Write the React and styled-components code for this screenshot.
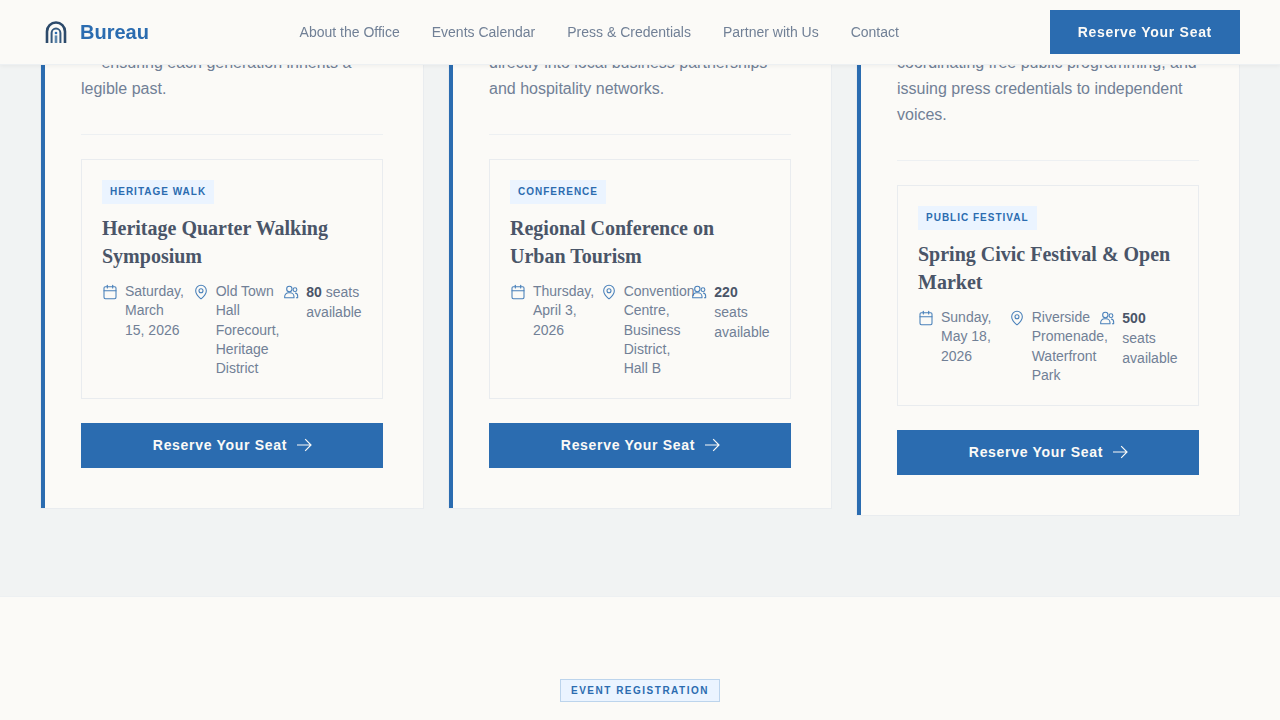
import React from "react";
import styled, { createGlobalStyle } from "styled-components";
import { Calendar, MapPin } from "lucide-react";

const GlobalStyle = createGlobalStyle`
    html, body {
        margin: 0;
        padding: 0;
        background: #fbfaf7;
        font-family: "Liberation Sans", Arial, sans-serif;
    }
    * {
        box-sizing: border-box;
    }
`;

const events = [
    {
        text: "— ensuring each generation inherits a legible past.",
        tag: "Heritage Walk",
        title: "Heritage Quarter Walking Symposium",
        date: "Saturday, March 15, 2026",
        place: "Old Town Hall Forecourt, Heritage District",
        seats: 80,
    },
    {
        text: "directly into local business partnerships and hospitality networks.",
        tag: "Conference",
        title: "Regional Conference on Urban Tourism",
        date: "Thursday, April 3, 2026",
        place: "Convention Centre, Business District, Hall B",
        seats: 220,
    },
    {
        text: "coordinating free public programming, and issuing press credentials to independent voices.",
        tag: "Public Festival",
        title: "Spring Civic Festival & Open Market",
        date: "Sunday, May 18, 2026",
        place: "Riverside Promenade, Waterfront Park",
        seats: 500,
    },
];

const links = ["About the Office", "Events Calendar", "Press & Credentials", "Partner with Us", "Contact"];

const Logo = () => (
    <svg width="32" height="32" viewBox="0 0 32 32" fill="none">
        <path d="M7 27V15.5a9 9 0 0 1 18 0V27" stroke="#2c4a6b" strokeWidth="2.6" />
        <path d="M11.6 27V17a4.4 4.4 0 0 1 8.8 0V27" stroke="#35597e" strokeWidth="2" />
        <path d="M14.7 27v-7.6h2.6V27z" fill="#5f88ad" />
        <circle cx="16" cy="17" r="1.3" fill="#2b6cb0" />
    </svg>
);

const ArrowIcon = () => (
    <svg width="14" height="12" viewBox="3 4.5 18 15" fill="none" stroke="currentColor" strokeWidth="1.5" overflow="visible">
        <path d="M13.5 4.5 21 12l-7.5 7.5M21 12H3" />
    </svg>
);

const PeopleIcon = () => (
    <svg width="16" height="16" viewBox="0 0 24 24" fill="none" stroke="currentColor" strokeWidth="1.6" strokeLinejoin="round">
        <circle cx="9.5" cy="7.5" r="4" />
        <path d="M2.5 20.5v-1.5a6 6 0 0 1 6-6h2a6 6 0 0 1 6 6v1.5z" />
        <circle cx="18" cy="8.5" r="2.8" />
        <path d="M18 13.5a4.5 4.5 0 0 1 4 4.5v2.5h-2.5" />
    </svg>
);

const App = () => (
    <Page>
        <GlobalStyle />
        <Header>
            <Brand>
                <Logo />
                Bureau
            </Brand>
            <Nav>
                {links.map((link) => (
                    <NavLink key={link}>{link}</NavLink>
                ))}
            </Nav>
            <HeaderButton>Reserve Your Seat</HeaderButton>
        </Header>

        <EventsSection>
            {events.map((event) => (
                <Card key={event.tag}>
                    <Intro>{event.text}</Intro>
                    <EventBox>
                        <Tag>{event.tag}</Tag>
                        <EventTitle>{event.title}</EventTitle>
                        <Meta>
                            <MetaItem>
                                <Calendar size={16} strokeWidth={1.6} />
                                <MetaText>{event.date}</MetaText>
                            </MetaItem>
                            <MetaItem>
                                <MapPin size={16} strokeWidth={1.6} />
                                <MetaText>{event.place}</MetaText>
                            </MetaItem>
                            <MetaItem>
                                <PeopleIcon />
                                <Seats>
                                    <strong>{event.seats}</strong> seats available
                                </Seats>
                            </MetaItem>
                        </Meta>
                    </EventBox>
                    <CardButton>
                        Reserve Your Seat
                        <ArrowIcon />
                    </CardButton>
                </Card>
            ))}
        </EventsSection>

        <RegistrationSection>
            <SectionLabel>Event Registration</SectionLabel>
        </RegistrationSection>
    </Page>
);

const Page = styled.div`
    height: 720px;
    overflow: hidden;
    background: #f1f3f3;
`;

const Header = styled.header`
    position: fixed;
    top: 0;
    left: 0;
    right: 0;
    z-index: 10;
    height: 65px;
    padding: 0 40px;
    display: flex;
    align-items: center;
    justify-content: space-between;
    background: #fbfaf7;
    border-bottom: 1px solid #edf0f2;
    box-shadow: 0 1px 4px rgba(0, 0, 0, 0.05);
`;

const Brand = styled.div`
    display: flex;
    align-items: center;
    gap: 8px;
    font-size: 20px;
    font-weight: 700;
    color: #2b6cb0;
`;

const Nav = styled.nav`
    display: flex;
    gap: 32px;
`;

const NavLink = styled.a`
    font-size: 14px;
    color: #718096;
`;

const HeaderButton = styled.button`
    height: 44px;
    padding: 0 28px;
    border: none;
    background: #2b6cb0;
    color: #fbfaf7;
    font-family: inherit;
    font-size: 14px;
    font-weight: 700;
    letter-spacing: 0.7px;
`;

const EventsSection = styled.section`
    display: grid;
    grid-template-columns: repeat(3, 1fr);
    gap: 24px;
    align-items: start;
    padding: 8px 40px 80px;
    background: #f1f3f3;
`;

const Card = styled.article`
    position: relative;
    padding: 41px 40px 40px;
    background: #fbfaf7;
    border: 1px solid #e9ecef;

    &::before {
        content: "";
        position: absolute;
        top: 0;
        bottom: 0;
        left: 0;
        width: 4px;
        background: #2b6cb0;
    }
`;

const Intro = styled.p`
    margin: 0 0 24px;
    padding-bottom: 32px;
    border-bottom: 1px solid #edf0f2;
    font-size: 16px;
    line-height: 26px;
    color: #718096;
`;

const EventBox = styled.div`
    padding: 20px;
    border: 1px solid #e9ecef;
`;

const Tag = styled.span`
    display: block;
    width: fit-content;
    height: 24px;
    padding: 0 8px;
    background: #ebf4ff;
    color: #2b6cb0;
    font-size: 10px;
    font-weight: 700;
    line-height: 24px;
    letter-spacing: 1px;
    text-transform: uppercase;
`;

const EventTitle = styled.h3`
    margin: 10px 0 12px;
    font-family: "Liberation Serif", "Times New Roman", serif;
    font-size: 20px;
    font-weight: 700;
    line-height: 28px;
    color: #4a5568;
`;

const Meta = styled.div`
    display: grid;
    grid-template-columns: repeat(3, minmax(0, 1fr));
    gap: 12px;
`;

const MetaItem = styled.div`
    display: flex;
    align-items: flex-start;
    gap: 7px;
    min-width: 0;
    color: #718096;

    svg {
        flex-shrink: 0;
        margin-top: 1.5px;
        color: #2b6cb0;
        opacity: 0.85;
    }
`;

const MetaText = styled.span`
    flex-shrink: 0;
    width: calc(100% - 17px);
    font-size: 14px;
    line-height: 19.25px;
`;

const Seats = styled.span`
    font-size: 14px;
    line-height: 20px;

    strong {
        color: #4a5568;
    }
`;

const CardButton = styled.button`
    width: 100%;
    height: 45px;
    margin-top: 24px;
    padding: 0 0 2px;
    display: flex;
    align-items: center;
    justify-content: center;
    gap: 10px;
    border: none;
    background: #2b6cb0;
    color: #fbfaf7;
    font-family: inherit;
    font-size: 14px;
    font-weight: 700;
    letter-spacing: 0.7px;
`;

const RegistrationSection = styled.section`
    height: 200px;
    padding-top: 82px;
    display: flex;
    justify-content: center;
    align-items: flex-start;
    background: #fbfaf7;
    border-top: 1px solid #edf0f2;
`;

const SectionLabel = styled.span`
    height: 23px;
    padding: 0 10px;
    background: #ebf4ff;
    border: 1px solid #bcd4ec;
    color: #2b6cb0;
    font-size: 10px;
    font-weight: 700;
    line-height: 21px;
    letter-spacing: 1.5px;
    text-transform: uppercase;
`;

export default App;
